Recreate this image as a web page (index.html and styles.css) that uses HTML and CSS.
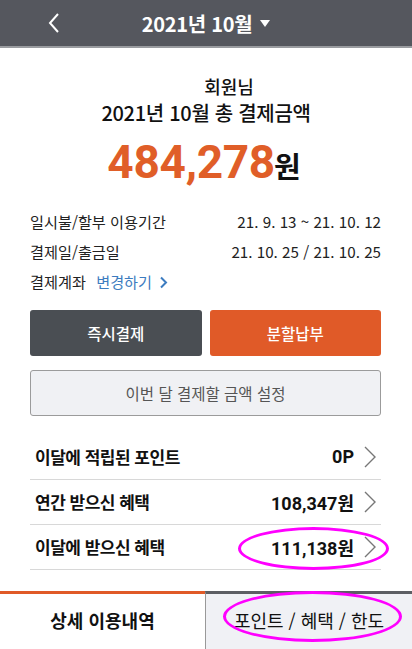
FILE: index.html
```html
<!DOCTYPE html>
<html lang="ko">
<head>
<meta charset="utf-8">
<link rel="stylesheet" href="styles.css">
</head>
<body>
<div class="page">
  <header class="topbar">
    <svg class="back" width="14" height="22" viewBox="0 0 14 22"><path d="M11 2 L3 11 L11 20" fill="none" stroke="#fff" stroke-width="2"/></svg>
    <div class="title">2021년 10월 <span class="caret"></span></div>
  </header>

  <section class="summary">
    <div class="member">회원님</div>
    <div class="heading">2021년 10월 총 결제금액</div>
    <div class="amount"><span class="num">484,278</span><span class="won">원</span></div>
  </section>

  <section class="info">
    <div class="info-row"><span>일시불/할부 이용기간</span><span>21. 9. 13 ~ 21. 10. 12</span></div>
    <div class="info-row"><span>결제일/출금일</span><span>21. 10. 25 / 21. 10. 25</span></div>
    <div class="info-row"><span>결제계좌 <span class="link">변경하기 <svg width="9" height="13" viewBox="0 0 9 13"><path d="M2 1.5 L7 6.5 L2 11.5" fill="none" stroke="#3d7cc0" stroke-width="2"/></svg></span></span></div>
  </section>

  <section class="actions">
    <div class="btn-row">
      <button class="btn dark">즉시결제</button>
      <button class="btn orange">분할납부</button>
    </div>
    <button class="btn light">이번 달 결제할 금액 설정</button>
  </section>

  <section class="list">
    <div class="list-row"><span class="lbl">이달에 적립된 포인트</span><span class="val">0P <svg class="chev" width="14" height="24" viewBox="0 0 14 24"><path d="M2 2 L12 12 L2 22" fill="none" stroke="#777" stroke-width="1.4"/></svg></span></div>
    <div class="list-row"><span class="lbl">연간 받으신 혜택</span><span class="val">108,347원 <svg class="chev" width="14" height="24" viewBox="0 0 14 24"><path d="M2 2 L12 12 L2 22" fill="none" stroke="#777" stroke-width="1.4"/></svg></span></div>
    <div class="list-row"><span class="lbl">이달에 받으신 혜택</span><span class="val">111,138원 <svg class="chev" width="14" height="24" viewBox="0 0 14 24"><path d="M2 2 L12 12 L2 22" fill="none" stroke="#777" stroke-width="1.4"/></svg></span></div>
  </section>

  <nav class="tabs">
    <div class="tab active">상세 이용내역</div>
    <div class="tab">포인트 / 혜택 / 한도</div>
  </nav>

  <div class="mark mark1"></div>
  <div class="mark mark2"></div>
</div>
</body>
</html>
```
FILE: styles.css
```css
* { box-sizing: border-box; }
html, body { margin: 0; padding: 0; background: #fff; }
body { font-family: "Noto Sans CJK KR", "Noto Sans", sans-serif; color: #111; }
.page { position: relative; width: 412px; height: 649px; overflow: hidden; display: flex; flex-direction: column; }

.topbar { height: 48px; flex: 0 0 48px; background: #55575e; border-bottom: 2px solid #9a9ca0; display: flex; align-items: center; justify-content: center; position: relative; }
.back { position: absolute; left: 47px; top: 12px; }
.title { color: #fff; font-size: 20px; font-weight: 700; letter-spacing: -0.3px; display: flex; align-items: center; gap: 6px; }
.caret { display: inline-block; width: 0; height: 0; border-left: 5px solid transparent; border-right: 5px solid transparent; border-top: 7px solid #fff; margin-left: 2px; margin-top: 1px; }

.summary { display: flex; flex-direction: column; align-items: center; padding-top: 25px; }
.member { font-size: 18px; font-weight: 500; line-height: 26px; margin-left: 46px; }
.heading { font-size: 20px; font-weight: 500; line-height: 28px; letter-spacing: -0.3px; }
.amount { display: flex; align-items: baseline; margin-top: 10px; line-height: 50px; height: 50px; margin-left: -4px; }
.amount .num { color: #e05e28; font-family: Roboto, sans-serif; font-size: 46px; font-weight: 700; letter-spacing: -0.3px; }
.amount .won { font-size: 29px; font-weight: 700; margin-left: -1px; }

.info { padding: 19px 31px 0 30px; display: flex; flex-direction: column; }
.info-row { display: flex; justify-content: space-between; font-size: 15.2px; line-height: 30px; color: #222; }
.link { color: #3d7cc0; margin-left: 6px; }
.link svg { margin-left: 3px; vertical-align: -1px; }

.actions { padding: 13.5px 31px 0 30px; display: flex; flex-direction: column; gap: 14px; }
.btn-row { display: flex; gap: 8px; }
.btn { font-family: inherit; font-size: 15.5px; border-radius: 3px; height: 46px; border: none; }
.btn-row .btn { flex: 1; color: #fff; font-weight: 500; }
.btn.dark { background: #4a4e53; }
.btn.orange { background: #e05a28; }
.btn.light { background: #f0f1f4; border: 1.5px solid #9b9b9b; color: #555; font-weight: 400; }

.list { padding: 19px 31px 0 30px; display: flex; flex-direction: column; }
.list-row { height: 45px; display: flex; justify-content: space-between; align-items: center; border-bottom: 1.5px solid #d8d8d8; font-size: 18px; font-weight: 700; }
.lbl { font-size: 17px; letter-spacing: -0.5px; padding-left: 5px; }
.val { display: flex; align-items: center; gap: 9px; font-family: Roboto, "Noto Sans CJK KR", sans-serif; }
.chev { margin-right: 4px; }

.tabs { margin-top: auto; height: 58px; flex: 0 0 58px; display: flex; }
.tab { flex: 1; display: flex; align-items: center; justify-content: center; font-size: 18px; }
.tab.active { border-top: 3px solid #e05a28; font-weight: 700; padding-bottom: 4px; flex: 0 0 205px; }
.tab:not(.active) { background: #f0f1f5; border-top: 3px solid #5c5e63; border-left: 1px solid #999; padding-bottom: 4px; }

.mark { position: absolute; border: 3px solid #ff00ff; border-radius: 50%; }
.mark1 { left: 238px; top: 527px; width: 151px; height: 43px; }
.mark2 { left: 223px; top: 591px; width: 179px; height: 51px; }
```
